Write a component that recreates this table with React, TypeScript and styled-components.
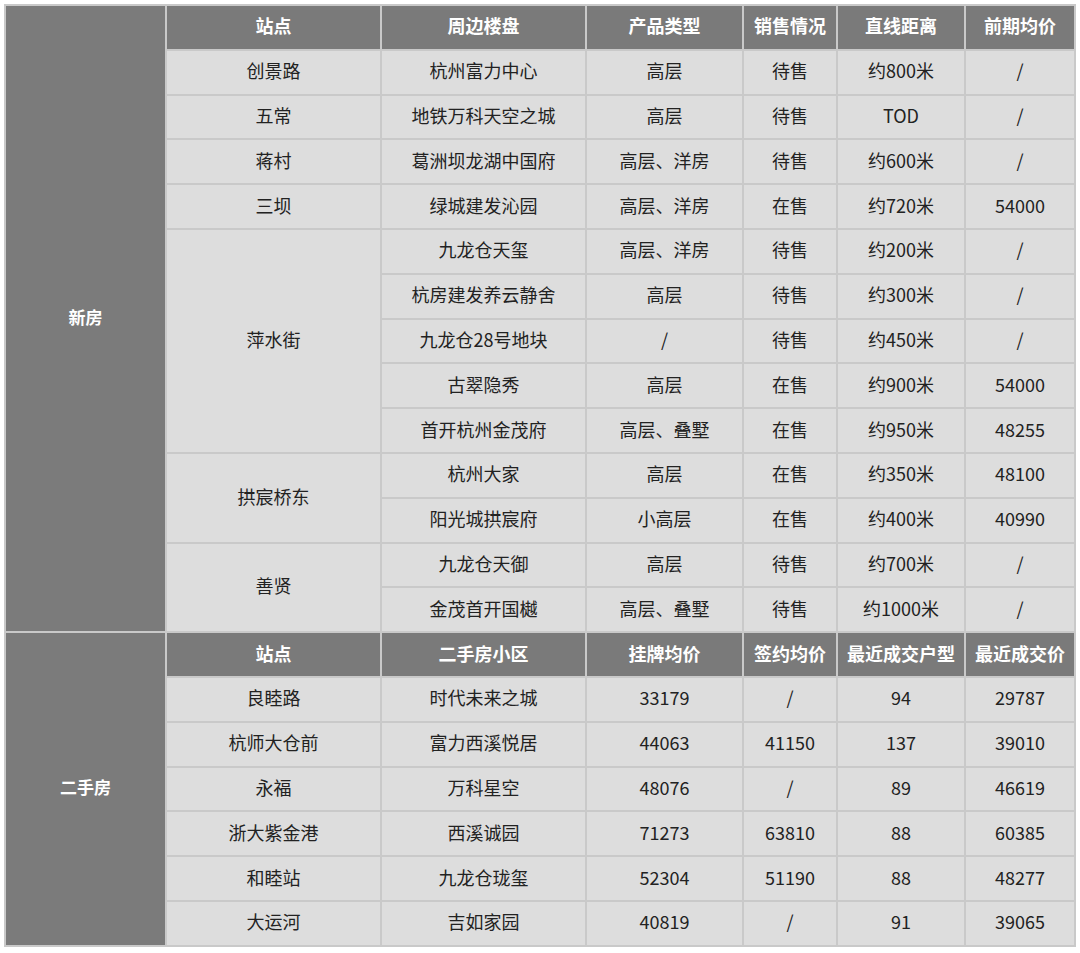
import React from "react";
import styled, { createGlobalStyle } from "styled-components";

const GlobalStyle = createGlobalStyle`
  body {
    margin: 0;
    background: #ffffff;
    font-family: "Noto Sans CJK SC", "Noto Sans", sans-serif;
  }
`;

const Page = styled.div`
  padding: 4px 0 0 4px;
`;

const Table = styled.table`
  width: 1070px;
  table-layout: fixed;
  border-collapse: collapse;
  border: 2px solid #c9c9c9;
`;

const Cell = styled.td`
  height: 38.8px;
  padding: 0 0 4px 0;
  border: 2px solid #c9c9c9;
  background: #dddddd;
  color: #222222;
  font-size: 18px;
  text-align: center;
  vertical-align: middle;
  white-space: nowrap;
`;

const HeadCell = styled(Cell)`
  background: #7a7a7a;
  color: #ffffff;
  font-weight: 700;
`;

const SideCell = styled(Cell)`
  background: #7b7b7b;
  color: #ffffff;
  font-weight: 700;
  font-size: 17px;
`;

const widths = [161, 215, 205, 157, 94, 128, 110];

type Group = { station: string; rows: string[][] };

const newHouse: Group[] = [
  { station: "创景路", rows: [["杭州富力中心", "高层", "待售", "约800米", "/"]] },
  { station: "五常", rows: [["地铁万科天空之城", "高层", "待售", "TOD", "/"]] },
  { station: "蒋村", rows: [["葛洲坝龙湖中国府", "高层、洋房", "待售", "约600米", "/"]] },
  { station: "三坝", rows: [["绿城建发沁园", "高层、洋房", "在售", "约720米", "54000"]] },
  {
    station: "萍水街",
    rows: [
      ["九龙仓天玺", "高层、洋房", "待售", "约200米", "/"],
      ["杭房建发养云静舍", "高层", "待售", "约300米", "/"],
      ["九龙仓28号地块", "/", "待售", "约450米", "/"],
      ["古翠隐秀", "高层", "在售", "约900米", "54000"],
      ["首开杭州金茂府", "高层、叠墅", "在售", "约950米", "48255"],
    ],
  },
  {
    station: "拱宸桥东",
    rows: [
      ["杭州大家", "高层", "在售", "约350米", "48100"],
      ["阳光城拱宸府", "小高层", "在售", "约400米", "40990"],
    ],
  },
  {
    station: "善贤",
    rows: [
      ["九龙仓天御", "高层", "待售", "约700米", "/"],
      ["金茂首开国樾", "高层、叠墅", "待售", "约1000米", "/"],
    ],
  },
];

const secondHand: string[][] = [
  ["良睦路", "时代未来之城", "33179", "/", "94", "29787"],
  ["杭师大仓前", "富力西溪悦居", "44063", "41150", "137", "39010"],
  ["永福", "万科星空", "48076", "/", "89", "46619"],
  ["浙大紫金港", "西溪诚园", "71273", "63810", "88", "60385"],
  ["和睦站", "九龙仓珑玺", "52304", "51190", "88", "48277"],
  ["大运河", "吉如家园", "40819", "/", "91", "39065"],
];

const newHead = ["站点", "周边楼盘", "产品类型", "销售情况", "直线距离", "前期均价"];
const oldHead = ["站点", "二手房小区", "挂牌均价", "签约均价", "最近成交户型", "最近成交价"];

const newCount = newHouse.reduce((n, g) => n + g.rows.length, 0);

const App = () => {
  return (
    <Page>
      <GlobalStyle />
      <Table>
        <colgroup>
          {widths.map((w, i) => (
            <col key={i} style={{ width: w }} />
          ))}
        </colgroup>
        <tbody>
          <tr>
            <SideCell rowSpan={newCount + 1}>新房</SideCell>
            {newHead.map((h) => (
              <HeadCell key={h}>{h}</HeadCell>
            ))}
          </tr>
          {newHouse.map((g) =>
            g.rows.map((r, i) => (
              <tr key={g.station + i}>
                {i === 0 && <Cell rowSpan={g.rows.length}>{g.station}</Cell>}
                {r.map((v, j) => (
                  <Cell key={j}>{v}</Cell>
                ))}
              </tr>
            ))
          )}
          <tr>
            <SideCell rowSpan={secondHand.length + 1}>二手房</SideCell>
            {oldHead.map((h) => (
              <HeadCell key={h}>{h}</HeadCell>
            ))}
          </tr>
          {secondHand.map((r) => (
            <tr key={r[0]}>
              {r.map((v, j) => (
                <Cell key={j}>{v}</Cell>
              ))}
            </tr>
          ))}
        </tbody>
      </Table>
    </Page>
  );
};

export default App;
